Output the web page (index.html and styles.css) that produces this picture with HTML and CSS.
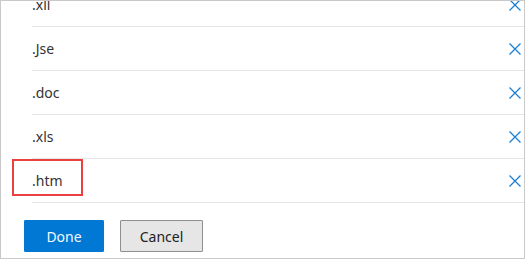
FILE: index.html
```html
<!DOCTYPE html>
<html>
<head>
<meta charset="utf-8">
<link rel="stylesheet" href="styles.css">
</head>
<body>
<div class="panel">
  <ul class="list">
    <li class="row"><span class="ext">.xll</span><svg class="x" viewBox="0 0 12 12"><path d="M0.5 0.5L11.5 11.5M11.5 0.5L0.5 11.5"/></svg></li>
    <li class="row"><span class="ext">.Jse</span><svg class="x" viewBox="0 0 12 12"><path d="M0.5 0.5L11.5 11.5M11.5 0.5L0.5 11.5"/></svg></li>
    <li class="row"><span class="ext">.doc</span><svg class="x" viewBox="0 0 12 12"><path d="M0.5 0.5L11.5 11.5M11.5 0.5L0.5 11.5"/></svg></li>
    <li class="row"><span class="ext">.xls</span><svg class="x" viewBox="0 0 12 12"><path d="M0.5 0.5L11.5 11.5M11.5 0.5L0.5 11.5"/></svg></li>
    <li class="row"><span class="ext">.htm</span><svg class="x" viewBox="0 0 12 12"><path d="M0.5 0.5L11.5 11.5M11.5 0.5L0.5 11.5"/></svg><span class="highlight"></span></li>
  </ul>
  <div class="actions">
    <button class="btn primary">Done</button>
    <button class="btn secondary">Cancel</button>
  </div>
</div>
</body>
</html>
```
FILE: styles.css
```css
html, body {
  margin: 0;
  padding: 0;
  background: #ffffff;
}
body {
  font-family: "Segoe UI", "Noto Sans", "Open Sans", sans-serif;
  font-size: 14px;
  color: #333333;
}
.panel {
  box-sizing: border-box;
  width: 525px;
  height: 259px;
  border: 1px solid #c9c9c9;
  overflow: hidden;
  display: flex;
  flex-direction: column;
}
.list {
  list-style: none;
  margin: -18px 0 0 31px;
  padding: 0;
}
.row {
  position: relative;
  height: 43px;
  border-bottom: 1px solid #e6e6e6;
  display: flex;
  align-items: center;
  justify-content: space-between;
  padding-right: 3px;
}
.ext {
  line-height: 1;
}
.x {
  width: 12px;
  height: 12px;
  fill: none;
  stroke: #1a7fd4;
  stroke-width: 1.3;
}
.highlight {
  position: absolute;
  left: -20px;
  top: 0;
  width: 71px;
  height: 37px;
  box-sizing: border-box;
  border: 2px solid #e8413f;
}
.actions {
  display: flex;
  gap: 16px;
  padding: 17px 0 0 23px;
}
.btn {
  box-sizing: border-box;
  height: 32px;
  font-family: inherit;
  font-size: 14px;
  border-radius: 1px;
  padding: 0;
}
.primary {
  width: 80px;
  background: #0078d4;
  border: 1px solid #0078d4;
  color: #f2f8ff;
}
.secondary {
  width: 83px;
  background: #e6e6e6;
  border: 1px solid #8f8f8f;
  color: #222222;
}
```
